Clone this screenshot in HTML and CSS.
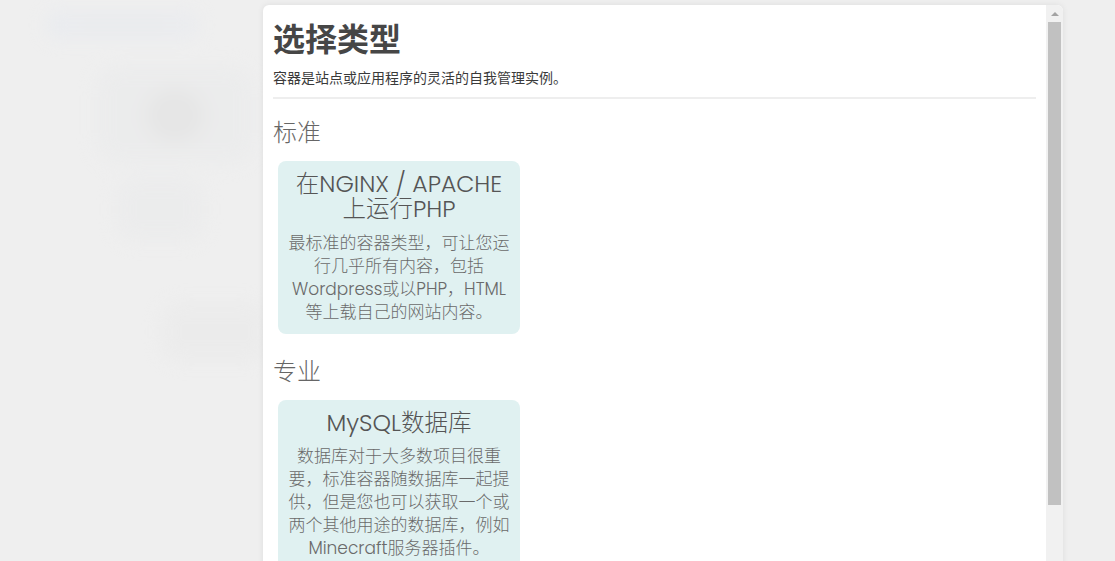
FILE: index.html
```html
<!DOCTYPE html>
<html lang="zh-CN">
<head>
<meta charset="utf-8">
<title>选择类型</title>
<link rel="stylesheet" href="styles.css">
</head>
<body>
<div class="backdrop">
  <div class="bg-page">
    <div class="bg-nav"><span class="bg-dot"></span><span class="bg-bar"></span></div>
    <div class="bg-panel">
      <div class="bg-avatar"></div>
    </div>
    <div class="bg-block"></div>
    <div class="bg-card"></div>
  </div>
</div>

<div class="modal">
  <div class="modal-body">
    <h1 class="title">选择类型</h1>
    <p class="subtitle">容器是站点或应用程序的灵活的自我管理实例。</p>
    <hr class="divider">

    <h2 class="section">标准</h2>
    <div class="cards">
      <div class="card">
        <div class="card-title">在NGINX / APACHE 上运行PHP</div>
        <div class="card-desc">最标准的容器类型，可让您运行几乎所有内容，包括Wordpress或以PHP，HTML等上载自己的网站内容。</div>
      </div>
    </div>

    <h2 class="section">专业</h2>
    <div class="cards">
      <div class="card">
        <div class="card-title">MySQL数据库</div>
        <div class="card-desc">数据库对于大多数项目很重要，标准容器随数据库一起提供，但是您也可以获取一个或两个其他用途的数据库，例如Minecraft服务器插件。</div>
      </div>
    </div>
  </div>
  <div class="scrollbar">
    <div class="scroll-arrow"></div>
    <div class="scroll-thumb"></div>
  </div>
</div>
</body>
</html>
```

FILE: styles.css
```css
html, body {
  margin: 0;
  padding: 0;
  height: 100%;
  overflow: hidden;
}

body {
  background: #efefef;
  font-family: Poppins, "Open Sans", "Noto Sans CJK SC", sans-serif;
  color: #555;
}

/* blurred page behind the dialog */
.backdrop {
  height: 100%;
  filter: blur(9px);
  opacity: 0.45;
}

.bg-page {
  padding: 10px 0 0 45px;
  display: flex;
  flex-direction: column;
}

.bg-nav {
  display: flex;
  align-items: center;
  gap: 10px;
  width: 140px;
  height: 30px;
  background: #e6e9ef;
  border-radius: 10px;
  padding-left: 14px;
}

.bg-dot {
  width: 10px;
  height: 10px;
  border-radius: 50%;
  background: #d8e2f2;
}

.bg-bar {
  width: 90px;
  height: 8px;
  background: #e0e3e8;
  border-radius: 4px;
}

.bg-panel {
  margin: 25px 0 0 50px;
  width: 160px;
  height: 100px;
  background: #e8e9ea;
  border-radius: 24px;
  display: flex;
  align-items: center;
  justify-content: center;
}

.bg-avatar {
  width: 60px;
  height: 55px;
  border-radius: 50%;
  background: #dcdcdc;
}

.bg-block {
  margin: 12px 0 0 70px;
  width: 90px;
  height: 65px;
  background: #e8e9ea;
  border-radius: 20px;
}

.bg-card {
  margin: 60px 0 0 115px;
  width: 110px;
  height: 60px;
  background: #e8e8e8;
  border-radius: 20px;
}

/* dialog */
.modal {
  position: absolute;
  top: 5px;
  left: 263px;
  width: 800px;
  height: 600px;
  background: #fff;
  border-radius: 6px 6px 0 0;
  box-shadow: 0 0 6px rgba(0, 0, 0, 0.08);
  display: flex;
  overflow: hidden;
}

.modal-body {
  flex: 1;
  padding: 13px 10px 0 10px;
  min-width: 0;
}

.title {
  margin: 0;
  font-size: 32px;
  line-height: 38px;
  font-weight: 700;
  color: #464646;
  font-family: "Noto Sans CJK SC", sans-serif;
}

.subtitle {
  margin: 11px 0 0 0;
  font-size: 14px;
  line-height: 20px;
  color: #3a3a3a;
  font-family: "Noto Sans CJK SC", sans-serif;
}

.divider {
  margin: 10px 0 0 0;
  border: 0;
  height: 2px;
  background: #eeeeee;
}

.section {
  margin: 19px 0 0 0;
  font-size: 24px;
  line-height: 30px;
  font-weight: 300;
  color: #666;
}

.cards {
  display: flex;
  margin-top: 13px;
}

.card {
  width: 222px;
  margin-left: 5px;
  padding: 10px;
  background: #e0f1f1;
  border-radius: 8px;
  text-align: center;
}

.card-title {
  font-size: 23.5px;
  line-height: 25px;
  font-weight: 300;
  color: #555;
}

.card-desc {
  margin-top: 10.5px;
  font-size: 17px;
  line-height: 23px;
  font-weight: 300;
  color: #6a6a6a;
}

.cards + .section {
  margin-top: 23px;
}

/* scrollbar */
.scrollbar {
  width: 17px;
  background: #f1f1f1;
  display: flex;
  flex-direction: column;
  align-items: center;
}

.scroll-arrow {
  margin-top: 7px;
  width: 0;
  height: 0;
  border-left: 4px solid transparent;
  border-right: 4px solid transparent;
  border-bottom: 4px solid #a3a3a3;
}

.scroll-thumb {
  margin-top: 6px;
  width: 13px;
  height: 483px;
  background: #c1c1c1;
}
```
